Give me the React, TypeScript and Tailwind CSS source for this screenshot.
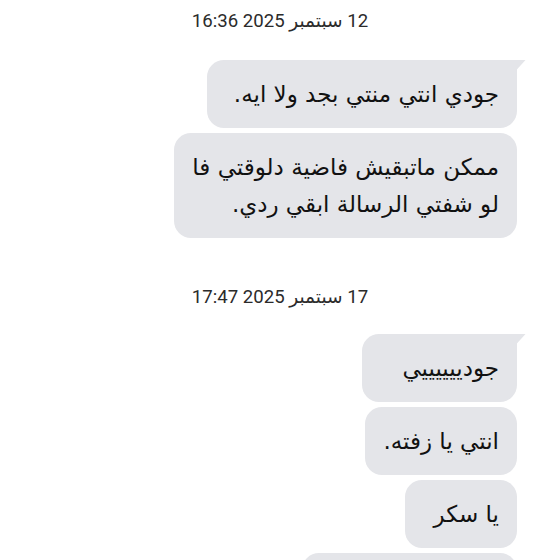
import React from "react";

const bubbleText = "font-['DejaVu_Sans',sans-serif] text-[23px] leading-[37px] text-[#111]";

function Stamp({ children, className = "" }: { children: React.ReactNode; className?: string }) {
  return (
    <div
      dir="rtl"
      className={`text-center font-['Roboto','DejaVu_Sans',sans-serif] text-[18.6px] leading-[24px] text-[#2b2b2b] ${className}`}
    >
      {children}
    </div>
  );
}

function Bubble({ lines, tail = false, width }: { lines: string[]; tail?: boolean; width?: string }) {
  return (
    <div
      dir="rtl"
      className={`relative rounded-[17px] bg-[#e4e5e9] px-[18px] pt-4 pb-[15px] ${tail ? "rounded-tr-none" : ""} ${width ?? ""}`}
    >
      {tail ? (
        <svg className="absolute -right-[9px] top-0" width="10" height="11" viewBox="0 0 10 11">
          <path d="M0 0 L9.5 0 L0 10.5 Z" fill="#e4e5e9" />
        </svg>
      ) : null}
      {lines.map((l) => (
        <p key={l} className={bubbleText}>
          {l}
        </p>
      ))}
    </div>
  );
}

export default function App() {
  return (
    <div className="h-[560px] w-[560px] overflow-hidden bg-white">
      <div className="flex flex-col pt-[9px]">
        <Stamp className="mb-[27px]">12 سبتمبر 2025 16:36</Stamp>
        <div className="flex flex-col items-end gap-[5px] pr-[43px]">
          <Bubble tail width="min-w-[310px]" lines={["جودي انتي منتي بجد ولا ايه."]} />
          <Bubble lines={["ممكن ماتبقيش فاضية دلوقتي فا", "لو شفتي الرسالة ابقي ردي."]} />
        </div>
        <Stamp className="mt-[47px] mb-[25px]">17 سبتمبر 2025 17:47</Stamp>
        <div className="flex flex-col items-end gap-[5px] pr-[43px]">
          <Bubble tail width="min-w-[155px]" lines={["جودييييييي"]} />
          <Bubble width="min-w-[151px]" lines={["انتي يا زفته."]} />
          <Bubble width="min-w-[112px]" lines={["يا سكر"]} />
          <div className="h-[68px] w-[215px] rounded-[17px] bg-[#e4e5e9]" />
        </div>
      </div>
    </div>
  );
}
